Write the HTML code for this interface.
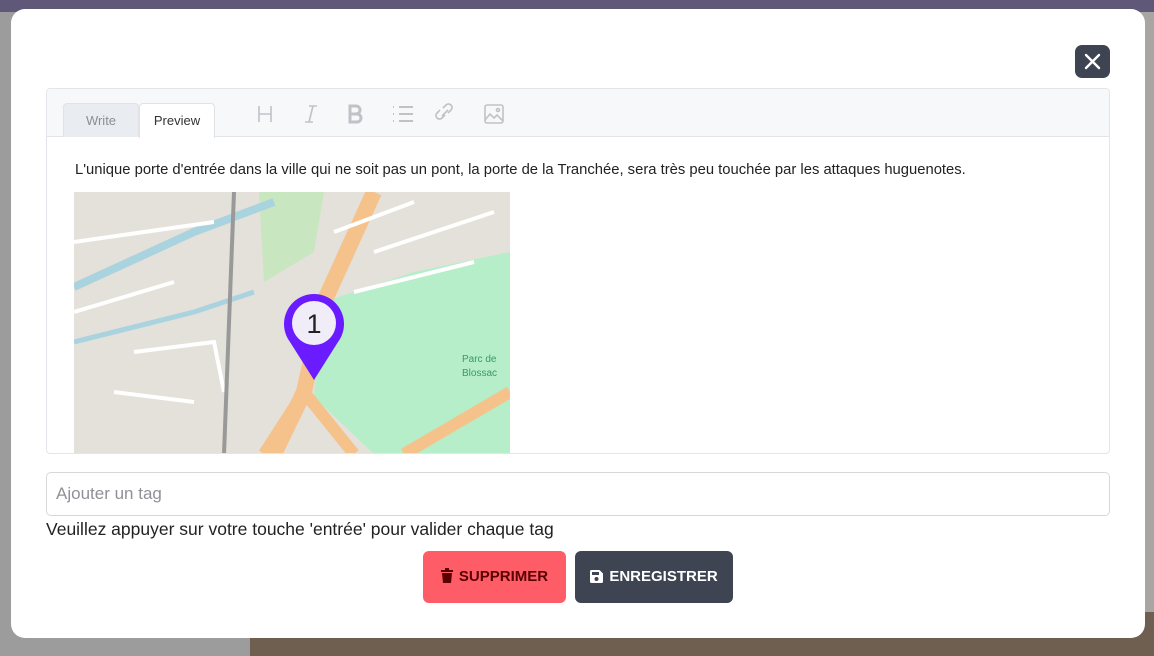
<!DOCTYPE html>
<html><head><meta charset="utf-8"><style>
*{box-sizing:border-box;margin:0;padding:0}
body{width:1154px;height:656px;overflow:hidden;position:relative;font-family:"Liberation Sans",sans-serif;background:#8a8580}
.bgtop{position:absolute;left:0;top:0;width:1154px;height:12px;background:#5f5878}
.bgleft{position:absolute;left:0;top:12px;width:250px;height:644px;background:#9c9c9c}
.bgbot{position:absolute;left:250px;top:600px;width:904px;height:56px;background:#6e5f50}
.bgright{position:absolute;left:1140px;top:12px;width:14px;height:600px;background:#a8a6a2}
.modal{position:absolute;left:11px;top:9px;width:1134px;height:629px;background:#fff;border-radius:14px}
.close{position:absolute;left:1075px;top:45px;width:35px;height:33px;background:#3f4452;border-radius:7px}
.editor{position:absolute;left:46px;top:88px;width:1064px;height:366px;border:1px solid #e3e5ea;border-radius:4px;overflow:hidden}
.bar{height:48px;background:#f6f8fa;border-bottom:1px solid #e3e5ea;position:relative}
.tab{position:absolute;top:14px;height:34px;font-size:13px;line-height:34px;text-align:center;border:1px solid #e0e2e6;border-bottom:none;border-radius:4px 4px 0 0}
.t1{left:16px;width:76px;background:#e9ecf0;color:#8a8f96}
.t2{left:92px;width:76px;background:#fff;color:#333;height:35px}
.txt{position:absolute;left:28px;top:73px;font-size:14.8px;color:#222;white-space:nowrap}
.map{position:absolute;left:27px;top:103px}
.tag{position:absolute;left:46px;top:472px;width:1064px;height:44px;border:1px solid #d6d8dc;border-radius:5px;font-size:17px;color:#8e9196;padding:11px 9px}
.help{position:absolute;left:46px;top:519px;font-size:17.5px;color:#222}
.btn{position:absolute;top:551px;height:52px;border-radius:6px;font-weight:bold;font-size:15px;line-height:52px;text-align:center}
.btn svg{vertical-align:-2px;margin-right:6px}
</style></head><body>
<div class="bgtop"></div><div class="bgleft"></div><div class="bgbot"></div><div class="bgright"></div>
<div class="modal"></div>
<div class="close"><svg width="35" height="33"><path d="M11 10L24 23M24 10L11 23" stroke="#fff" stroke-width="2.4" stroke-linecap="round"/></svg></div>
<div class="editor">
<div class="bar">
<div class="tab t1">Write</div><div class="tab t2">Preview</div>
<svg style="position:absolute;left:200px;top:12px" width="270" height="26" fill="none" stroke="#bfc3c8" stroke-width="1.6">
<path d="M12 5v16M24 5v16M12 13h12"/>
<path d="M62 5h8M58 21h8M66 5l-4 16"/>
<path d="M103 5h6a4 4 0 0 1 0 8h-6zM103 13h7a4 4 0 0 1 0 8h-7z" stroke-width="3"/>
<path d="M152 6h14M152 13h14M152 20h14M146 6h1M146 13h1M146 20h1" stroke-width="2"/>
<path d="M198 14l-3 3a3.5 3.5 0 0 1-5-5l3-3M201 12l3-3a3.5 3.5 0 0 0-5-5l-3 3M195 15l6-6"/>
<rect x="238" y="4" width="18" height="18" rx="2"/><path d="M238 19l5-6 4 4 3-3 6 6"/><circle cx="251" cy="9" r="1.5"/>
</svg>
</div>
<div class="txt">L'unique porte d'entrée dans la ville qui ne soit pas un pont, la porte de la Tranchée, sera très peu touchée par les attaques huguenotes.</div>
<svg class="map" width="436" height="262" viewBox="0 0 436 262">
<rect width="436" height="262" fill="#e4e0da"/>
<polygon points="250,110 340,80 436,60 436,262 300,262 240,205" fill="#b5eec9"/>
<polygon points="185,0 250,0 240,60 190,90" fill="#c8e6c0"/>
<path d="M0 95 L120 40 L200 10" stroke="#a9d3df" stroke-width="8" fill="none"/>
<path d="M0 150 L120 120 L180 100" stroke="#a9d3df" stroke-width="5" fill="none"/>
<path d="M300 0 L250 110 L230 200 L200 262" stroke="#f6c28b" stroke-width="16" fill="none"/>
<path d="M230 200 L280 262 M230 200 L190 262 M330 262 L436 200" stroke="#f6c28b" stroke-width="12" fill="none"/>
<path d="M0 50 L140 30 M0 120 L100 90 M60 160 L140 150 L150 200 M40 200 L120 210 M300 60 L420 20 M280 100 L400 70 M260 40 L340 10" stroke="#fff" stroke-width="4" fill="none"/>
<path d="M160 0 L150 262" stroke="#999" stroke-width="4" fill="none"/>
<path d="M240 188 L216 150 A30 30 0 1 1 264 150 Z" fill="#6a1bff"/>
<circle cx="240" cy="131" r="22" fill="#f0edf8"/>
<text x="240" y="141" text-anchor="middle" font-size="27" font-family="Liberation Sans" fill="#222">1</text>
<text x="388" y="170" font-size="10" fill="#3a9a60" font-family="Liberation Sans">Parc de</text>
<text x="388" y="184" font-size="10" fill="#3a9a60" font-family="Liberation Sans">Blossac</text>
</svg>
</div>
<div class="tag">Ajouter un tag</div>
<div class="help">Veuillez appuyer sur votre touche 'entrée' pour valider chaque tag</div>
<div class="btn" style="left:423px;width:143px;background:#fe5c66;color:#5a0000"><svg width="12" height="15" viewBox="0 0 12 15"><path d="M0 2h12v2H0zM4 0h4v2H4zM1 5h10l-1 10H2z" fill="#5a0000"/></svg>SUPPRIMER</div>
<div class="btn" style="left:575px;width:158px;background:#3f4452;color:#fff"><svg width="13" height="13" viewBox="0 0 13 13"><path d="M0 1.5A1.5 1.5 0 0 1 1.5 0h8L13 3.5v8A1.5 1.5 0 0 1 11.5 13h-10A1.5 1.5 0 0 1 0 11.5z" fill="#fff"/><rect x="2" y="2" width="7" height="3" fill="#3f4452"/><circle cx="6.5" cy="9" r="2" fill="#3f4452"/></svg>ENREGISTRER</div>
</body></html>
